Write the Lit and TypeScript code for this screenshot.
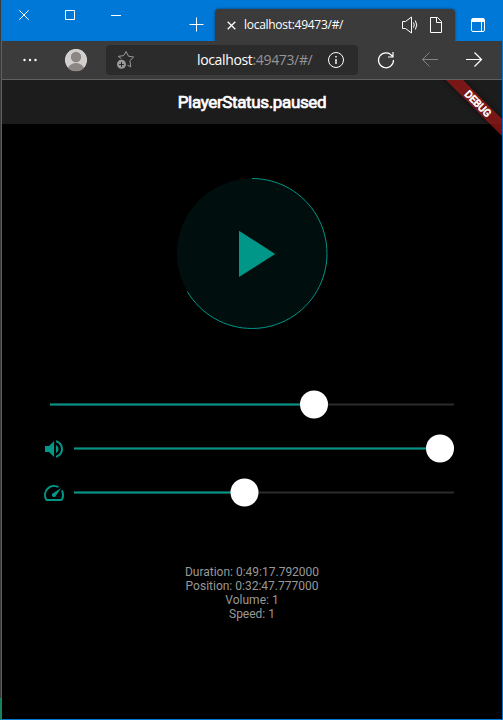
import { LitElement, html, css, svg } from "lit";
import { customElement, property } from "lit/decorators.js";

@customElement("window-chrome")
class WindowChrome extends LitElement {
  static styles = css`
    :host { display: block; font-family: "Open Sans", "Noto Sans", sans-serif; color: #fff; }
    svg { display: block; width: 100%; fill: none; stroke: #fff; stroke-width: 1; }
    .tabs { height: 41px; background: #0078d7; display: grid; grid-template-columns: 213px 240px 47px; align-items: end; overflow: hidden; }
    .left { height: 41px; }
    .right { height: 41px; }
    .tab { height: 32px; background: #3b3b3b; border-radius: 4px 4px 0 0; box-shadow: 0 0 3px rgba(0,0,0,.5); display: grid; grid-template-columns: 29px 1fr 59px; align-items: center; }
    .title { font-size: 12px; line-height: 32px; letter-spacing: -0.28px; white-space: nowrap; }
    .bar { height: 38px; background: #3b3b3b; border-bottom: 1px solid #606060; display: grid; grid-template-columns: 104px 252px 144px; align-items: center; }
    .address { height: 30px; background: #2b2b2b; border-radius: 4px; display: grid; grid-template-columns: 91px 1fr 40px; align-items: center; }
    .url { font-size: 14px; line-height: 28px; letter-spacing: -0.35px; white-space: nowrap; }
    .port { color: #959595; }
    .soft { fill: #999; stroke: none; }
  `;
  render() {
    return html`
      <div class="tabs">
        <svg class="left" viewBox="2 0 213 41">
          <path d="M19.3 10.3l9.4 9.4M28.7 10.3l-9.4 9.4M111 15.5h10M65.5 10.5h9v9h-9zM189.5 24.5h14M196.500 17.500v14" />
        </svg>
        <div class="tab">
          <svg height="32" viewBox="215 9 29 32"><path stroke-width="1.3" d="M227.700 21.700l7.600 7.600M235.300 21.700l-7.600 7.600" /></svg>
          <span class="title">localhost:49473/#/</span>
          <svg height="32" viewBox="396 9 59 32">
            <path d="M402.500 21.500h3l6-4.500v16l-6-4.500h-3zM413.500 22.500q1.500 2.500 0 5M415.300 20.500q3 4.500 0 9M430.500 17.500h7l4 4v11h-11zM436.500 17.500v5h5" />
          </svg>
        </div>
        <svg class="right" viewBox="455 0 47 41">
          <rect x="471.500" y="18.500" width="13" height="13" rx="1.500" /><path fill="#fff" stroke="none" d="M472 19h12v3h-12z" /><path d="M481.500 22v9" />
        </svg>
      </div>
      <div class="bar">
        <svg height="38" viewBox="2 41 104 38">
          <g fill="#fff" stroke="none"><circle cx="24.500" cy="60" r="1.200" /><circle cx="30" cy="60" r="1.200" /><circle cx="35.500" cy="60" r="1.200" /></g>
          <clipPath id="face"><circle cx="76" cy="60" r="11.200" /></clipPath>
          <g stroke="none" clip-path="url(#face)">
            <circle cx="76" cy="60" r="11.200" fill="#d2d0ce" />
            <circle cx="76" cy="57" r="5.200" fill="#8c8784" /><ellipse cx="76" cy="69.500" rx="8.200" ry="6.500" fill="#8c8784" />
          </g>
        </svg>
        <div class="address">
          <svg height="30" viewBox="106 45 91 30">
            <path stroke="#999" d="M121.300 58.500l-3.200-2.100 5.600-.8 2.400-4.100 2.400 4.700 5.200.8-3.800 3.700.9 6.200-3.300-1.700" />
            <circle class="soft" cx="121.500" cy="64.300" r="4.500" /><path stroke="#2b2b2b" d="M119 64.500h5M121.500 62v5" />
          </svg>
          <span class="url">localhost<span class="port">:49473/#/</span></span>
          <svg height="30" viewBox="318 45 40 30"><circle cx="336" cy="60" r="7.500" /><path stroke-width="1.400" d="M336 59v5M336 56v1.500" /></svg>
        </div>
        <svg height="38" viewBox="358 41 144 38">
          <path stroke-width="1.200" d="M392.300 56.200A7.500 7.500 0 1 0 393.500 60M393 52v5h-5M466 59.500h15.500M474.500 52.500l7 7-7 7" />
          <path stroke="#858585" d="M422.500 59.500H438M429.500 52.500l-7 7 7 7" />
        </svg>
      </div>`;
  }
}

@customElement("level-slider")
class LevelSlider extends LitElement {
  @property({ type: Number }) span = 380;
  @property({ type: Number }) at = 0;
  static styles = css`
    :host { display: block; height: 44px; }
    .track { display: block; }
    .rest { fill: #2c2c2c; }
    .done { fill: #009688; }
    .thumb { fill: #fff; }
  `;
  render() {
    return html`<svg class="track" width=${this.span} height="44">
      <rect class="rest" y="21.500" width=${this.span} height="2" />
      <rect class="done" y="21.500" width=${this.at} height="2" />
      <circle class="thumb" cx=${this.at} cy="22.500" r="14" />
    </svg>`;
  }
}

const volume = svg`<path d="M3 9v6h4l5 5V4L7 9H3zm13.500 3c0-1.770-1.020-3.290-2.500-4.030v8.050c1.480-.730 2.500-2.250 2.500-4.020zM14 3.230v2.060c2.890.860 5 3.540 5 6.710s-2.110 5.850-5 6.710v2.060c4.010-.910 7-4.490 7-8.770s-2.990-7.860-7-8.770z"/>`;
const speed = svg`<path d="M20.380 8.570l-1.230 1.850a8 8 0 0 1-.220 7.580H5.070A8 8 0 0 1 15.580 6.850l1.850-1.230A10 10 0 0 0 3.350 19a2 2 0 0 0 1.720 1h13.850a2 2 0 0 0 1.740-1 10 10 0 0 0-.270-10.440zm-9.790 6.840a2 2 0 0 0 2.830 0l5.660-8.490-8.490 5.660a2 2 0 0 0 0 2.830z"/>`;

@customElement("app-root")
class AppRoot extends LitElement {
  static styles = css`
    :host { display: block; font-family: Roboto, "Liberation Sans", sans-serif; }
    .screen { box-sizing: border-box; width: 503px; height: 720px; display: grid; grid-template-columns: 1px 1fr; overflow: hidden; }
    .edge { background: linear-gradient(#3a3a3a 698px, #16825d 698px); }
    .window { box-sizing: border-box; height: 720px; background: #000; border: solid #0078d7; border-width: 0 1px 1px; overflow: hidden; }
    .page { position: relative; }
    .nav { height: 44px; background: #1c1c1c; color: #fff; font-size: 17px; font-weight: 400; -webkit-text-stroke: 0.7px #fff; letter-spacing: -0.36px; line-height: 45px; text-align: center; }
    .banner { position: absolute; top: 0; right: 0; }
    .word { font-size: 10.200px; font-weight: 400; fill: #fff; stroke: #fff; stroke-width: .7px; text-anchor: middle; }
    .dial { display: block; margin: 50px auto 0; }
    .sliders { padding: 48px 48px 0; }
    .row { display: grid; grid-template-columns: 24px 380px; }
    .icon { width: 24px; height: 24px; fill: #009688; margin: 11px 0 0 -8px; }
    .info { margin-top: 51px; font-size: 12px; line-height: 14px; color: #999; text-align: center; }
  `;
  render() {
    return html`
      <div class="screen">
        <div class="edge"></div>
        <div class="window">
          <window-chrome></window-chrome>
          <div class="page">
            <div class="nav">PlayerStatus.paused</div>
            <svg class="banner" width="64" height="64" viewBox="438 80 64 64">
              <defs><filter id="blur" x="-20%" y="-100%" width="140%" height="300%"><feGaussianBlur stdDeviation="3" /></filter></defs>
              <g transform="translate(478 103.500) rotate(45)">
                <rect x="-50" y="-6" width="100" height="12" fill="#000" opacity=".5" filter="url(#blur)" />
                <rect x="-50" y="-6" width="100" height="12" fill="#b71c1c" fill-opacity=".63" />
                <text class="word" y="3.700">DEBUG</text>
              </g>
            </svg>
            <svg class="dial" width="160" height="160" viewBox="172 174 160 160">
              <circle cx="252" cy="253.500" r="75" fill="#000f0d" />
              <path d="M252 178.500A75 75 0 1 1 187.400 291.600" fill="none" stroke="#009688" />
              <path d="M239 230.700L275.200 254L239 277z" fill="#009688" />
            </svg>
            <div class="sliders">
              <level-slider .span=${404} .at=${264}></level-slider>
              <div class="row"><svg class="icon" viewBox="0 0 24 24">${volume}</svg><level-slider .at=${366}></level-slider></div>
              <div class="row"><svg class="icon" viewBox="0 0 24 24">${speed}</svg><level-slider .at=${170.500}></level-slider></div>
            </div>
            <div class="info">
              <div>Duration: 0:49:17.792000</div>
              <div>Position: 0:32:47.777000</div>
              <div>Volume: 1</div>
              <div>Speed: 1</div>
            </div>
          </div>
        </div>
      </div>`;
  }
}
